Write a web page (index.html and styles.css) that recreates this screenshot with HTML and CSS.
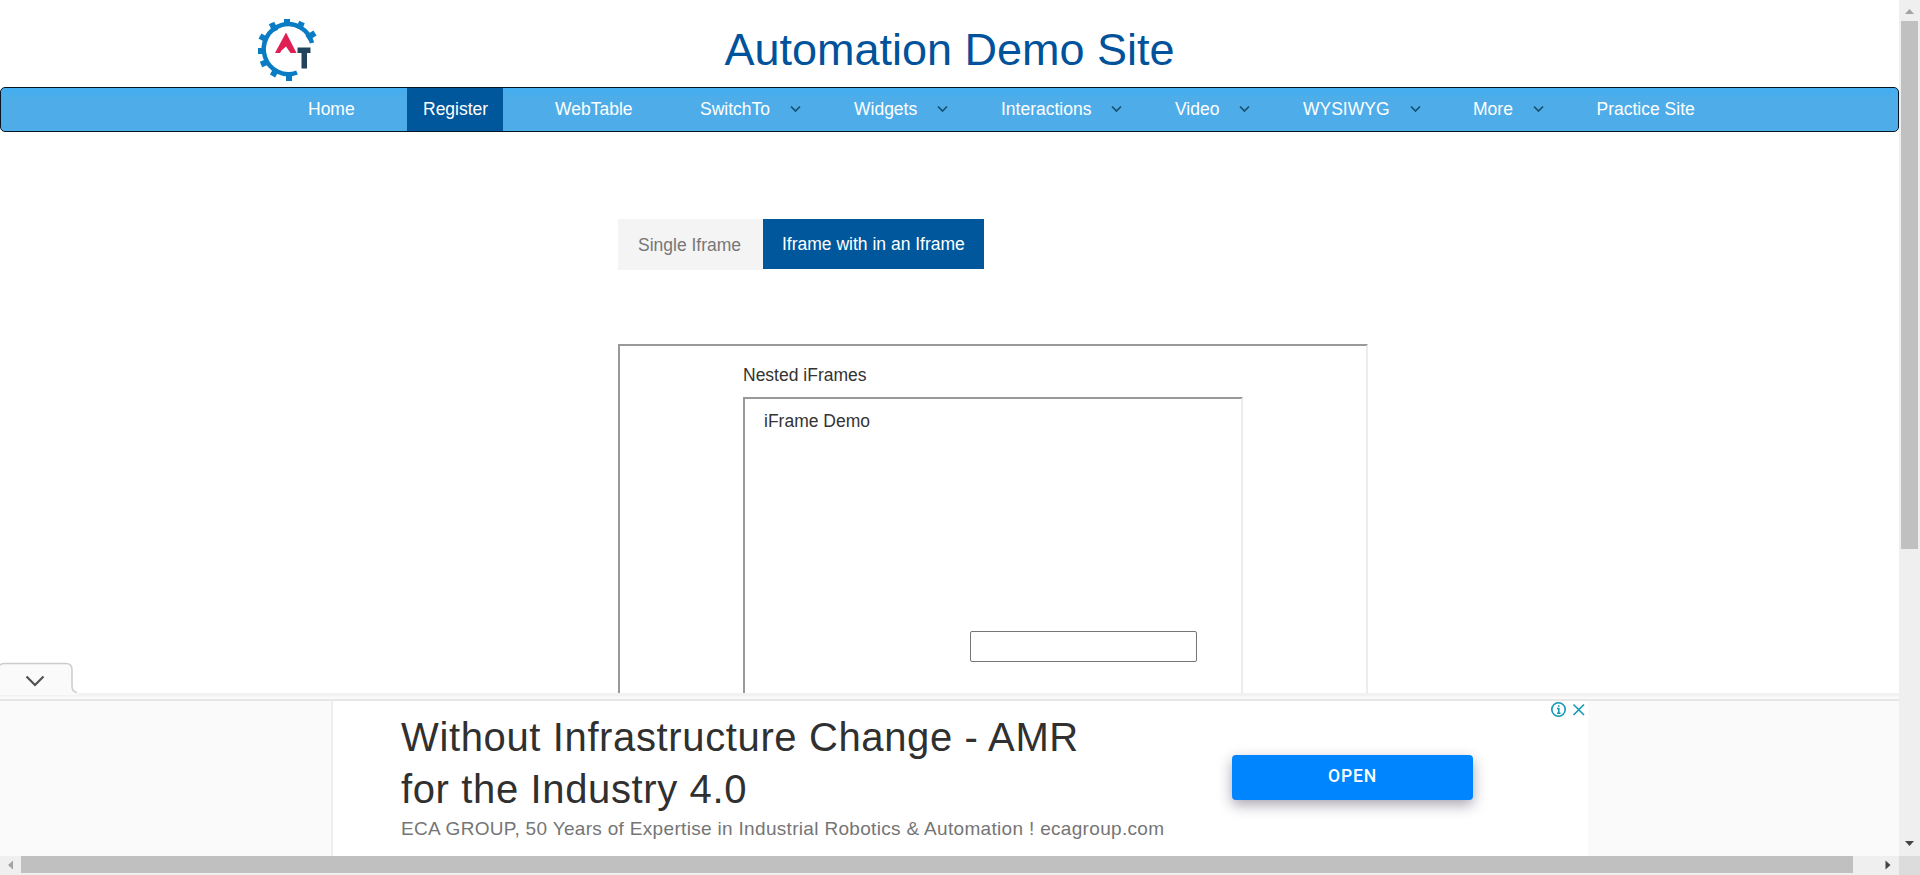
FILE: index.html
```html
<!DOCTYPE html>
<html lang="en">
<head>
<meta charset="utf-8">
<title>Automation Demo Site</title>
<link rel="stylesheet" href="styles.css">
</head>
<body>
<div class="window">
  <div class="page">
    <header class="header">
      <svg class="logo" width="62" height="66" viewBox="0 0 62 66">
        <g fill="none" stroke="#0a7cc4">
          <path d="M55 27A24.500 25 0 1 0 40 56.500" stroke-width="4.500"/>
          <path stroke-width="6" d="M30 10V3M42 13l3-7M50 22l8-5M18.500 15l-4-8M10 24l-7-4M7.500 35H1M10 46l-6 2.500M19 54l-3.500 6M32 57v8"/>
        </g>
        <path d="M29 16.500L39.500 37H33.500L29 30.500 24.500 34.500 23 37H18Z" fill="#e01f54"/>
        <path d="M40.500 31.500H53.500V37H50V52.500H44.500V37H40.500Z" fill="#22435c"/>
      </svg>
      <h1 class="title">Automation Demo Site</h1>
    </header>
    <nav class="nav">
      <a>Home</a>
      <a class="active">Register</a>
      <a>WebTable</a>
      <a>SwitchTo<svg class="caret" viewBox="0 0 11 8"><path d="M1 1.500L5.500 6 10 1.500"/></svg></a>
      <a>Widgets<svg class="caret" viewBox="0 0 11 8"><path d="M1 1.500L5.500 6 10 1.500"/></svg></a>
      <a>Interactions<svg class="caret" viewBox="0 0 11 8"><path d="M1 1.500L5.500 6 10 1.500"/></svg></a>
      <a>Video<svg class="caret" viewBox="0 0 11 8"><path d="M1 1.500L5.500 6 10 1.500"/></svg></a>
      <a>WYSIWYG<svg class="caret" viewBox="0 0 11 8"><path d="M1 1.500L5.500 6 10 1.500"/></svg></a>
      <a>More<svg class="caret" viewBox="0 0 11 8"><path d="M1 1.500L5.500 6 10 1.500"/></svg></a>
      <a>Practice Site</a>
    </nav>
    <main class="content">
      <div class="tabs">
        <a class="tab">Single Iframe</a>
        <a class="tab tab-active">Iframe with in an Iframe</a>
      </div>
      <section class="frame outer">
        <h5 class="frame-title">Nested iFrames</h5>
        <div class="frame inner">
          <h5 class="frame-title">iFrame Demo</h5>
          <input class="field" type="text">
        </div>
      </section>
    </main>
    <div class="toggle">
      <svg width="73" height="33" viewBox="0 0 73 33">
        <path class="toggle-fill" d="M0 2H66Q72 2 72 8V24Q72 31 78 31V33H0Z"/>
        <path class="toggle-shade" d="M0 3Q1 1.500 5 1.500H66Q72 1.500 72 8V24Q72 30 77 30.500"/>
        <path class="toggle-arrow" d="M26.500 14.500L35 23 43.500 14.500"/>
      </svg>
    </div>
    <aside class="ad">
      <div class="ad-body">
        <div class="ad-copy">
          <div class="ad-title">Without Infrastructure Change - AMR<br>for the Industry 4.0</div>
          <div class="ad-sub">ECA GROUP, 50 Years of Expertise in Industrial Robotics &amp; Automation ! ecagroup.com</div>
        </div>
        <a class="ad-button">OPEN</a>
        <svg class="ad-choices" width="36" height="17" viewBox="0 0 36 17">
          <circle cx="8.500" cy="8.500" r="6.700"/>
          <path d="M7 7.500H8.800V12M7 12.200H10.500M8.700 4.200V5.800M23.500 3.500L34 14M34 3.500L23.500 14"/>
        </svg>
      </div>
    </aside>
  </div>
  <div class="vbar">
    <svg width="21" height="21" viewBox="0 0 21 21"><path d="M6 14L10.500 9 15 14Z" fill="#a3a3a3"/></svg>
    <div class="vthumb"></div>
    <svg width="21" height="21" viewBox="0 0 21 21"><path d="M6 8L10.500 13 15 8Z" fill="#444"/></svg>
  </div>
  <div class="hbar">
    <svg width="21" height="19" viewBox="0 0 21 19"><path d="M13 4.500L8 9 13 13.500Z" fill="#a3a3a3"/></svg>
    <div class="hthumb"></div>
    <svg width="21" height="19" viewBox="0 0 21 19"><path d="M7.500 4.500L12.500 9 7.500 13.500Z" fill="#444"/></svg>
  </div>
  <div class="corner"></div>
</div>
</body>
</html>
```
FILE: styles.css
```css
* { box-sizing: border-box; }
body {
  margin: 0;
  background: #fff;
  font-family: "Liberation Sans", Arial, sans-serif;
  font-size: 17.5px;
  color: #333;
}
.window {
  display: grid;
  grid-template: 856px 19px / 1899px 21px;
  width: 1920px;
  height: 875px;
  overflow: hidden;
}
.page {
  position: relative;
  display: flex;
  flex-direction: column;
  overflow: hidden;
}
.header {
  display: grid;
  grid-template-columns: 62px 1fr;
  flex: 0 0 87px;
  padding: 0 319px 0 257px;
}
.logo { margin-top: 16px; }
.title {
  margin: 25px 0 0;
  font-size: 45px;
  line-height: 50px;
  font-weight: 400;
  color: #00529b;
  text-align: center;
}
.nav {
  display: grid;
  grid-template-columns: 115px 132px 145px 154px 147px 174px 128px 170px 123.5px 130px;
  flex: 0 0 45px;
  padding-left: 307px;
  border: 1px solid #061522;
  border-radius: 5px;
  background: linear-gradient(#42aef2, #4eade8 25%);
  line-height: 43px;
  color: #fff;
}
.nav a { white-space: nowrap; }
.nav .active {
  justify-self: start;
  margin-left: -16px;
  padding: 0 15px 0 16px;
  background: #00579c;
}
.caret {
  width: 11px;
  height: 8px;
  margin-left: 20px;
  vertical-align: 2px;
  fill: none;
  stroke: #17506f;
  stroke-width: 1.7;
}
.content {
  flex: 0 0 561px;
  padding: 87px 0 0 618px;
  overflow: hidden;
}
.tabs {
  display: flex;
  height: 51px;
}
.tab {
  padding: 1px 21px 0 20px;
  width: 145px;
  line-height: 50px;
  white-space: nowrap;
  background: #f4f4f4;
  color: #777;
}
.tab-active {
  width: 221px;
  height: 50px;
  padding: 0 19px;
  background: #00579c;
  color: #fff;
}
.frame {
  border: 2px solid;
  border-color: #999 #ececec #ececec #999;
}
.outer {
  width: 750px;
  height: 450px;
  margin-top: 74px;
  padding: 19px 0 0 123px;
}
.frame-title {
  margin: 0;
  font-size: 17.5px;
  line-height: 20px;
  font-weight: 400;
}
.inner {
  width: 500px;
  height: 320px;
  margin-top: 12px;
  padding: 12px 0 0 19px;
}
.field {
  display: block;
  width: 227px;
  height: 31px;
  margin: 200px 0 0 206px;
  border: 1px solid #767676;
  border-radius: 2px;
  background: #fff;
}
.toggle {
  position: absolute;
  z-index: 1;
  left: 0;
  top: 662px;
  width: 80px;
  height: 33px;
}
.toggle svg { display: block; overflow: visible; }
.toggle-fill { fill: #fafafa; }
.toggle-shade { fill: none; stroke: #ccc; stroke-width: 1.5; }
.toggle-arrow { fill: none; stroke: #505050; stroke-width: 2.2; }
.ad {
  position: relative;
  flex: 0 0 163px;
  padding: 6px 311px 0 331px;
  background: linear-gradient(#f2f2f2 0 3px, #fafafa 4px 6px, #e6e6e6 6px 8px, #fafafa 8px);
}
.ad-body {
  position: relative;
  display: flex;
  height: 157px;
  padding-left: 68px;
  border-top: 2px solid #e6e6e6;
  border-left: 2px solid #eee;
  background: #fff;
}
.ad-copy {
  width: 831px;
  flex: none;
  white-space: nowrap;
}
.ad-title {
  padding-top: 10px;
  font-size: 40px;
  line-height: 52px;
  letter-spacing: 0.63px;
  color: #303030;
}
.ad-sub {
  margin-top: 2px;
  font-size: 19px;
  line-height: 24px;
  letter-spacing: 0.32px;
  color: #757575;
}
.ad-button {
  width: 241px;
  height: 45px;
  margin-top: 54px;
  border-radius: 4px;
  background: #0085ff;
  box-shadow: 0 5px 14px rgba(40, 30, 60, 0.4);
  font: 500 17.5px/43px Roboto, "Liberation Sans", sans-serif;
  letter-spacing: 0.9px;
  text-align: center;
  color: #fff;
}
.ad-choices {
  position: absolute;
  right: 2px;
  top: 0;
  fill: none;
  stroke: #1599b5;
  stroke-width: 1.6;
}
.vbar {
  display: flex;
  flex-direction: column;
  justify-content: space-between;
  padding-bottom: 2px;
  background: #efefef;
}
.vthumb {
  width: 17px;
  height: 528px;
  margin: 0 0 auto 2px;
  background: #c0c0c0;
}
.hbar {
  display: flex;
  background: #efefef;
}
.hthumb {
  width: 1832px;
  height: 17px;
  margin-right: auto;
  background: #c0c0c0;
}
.corner { background: #dcdcdc; }
```
